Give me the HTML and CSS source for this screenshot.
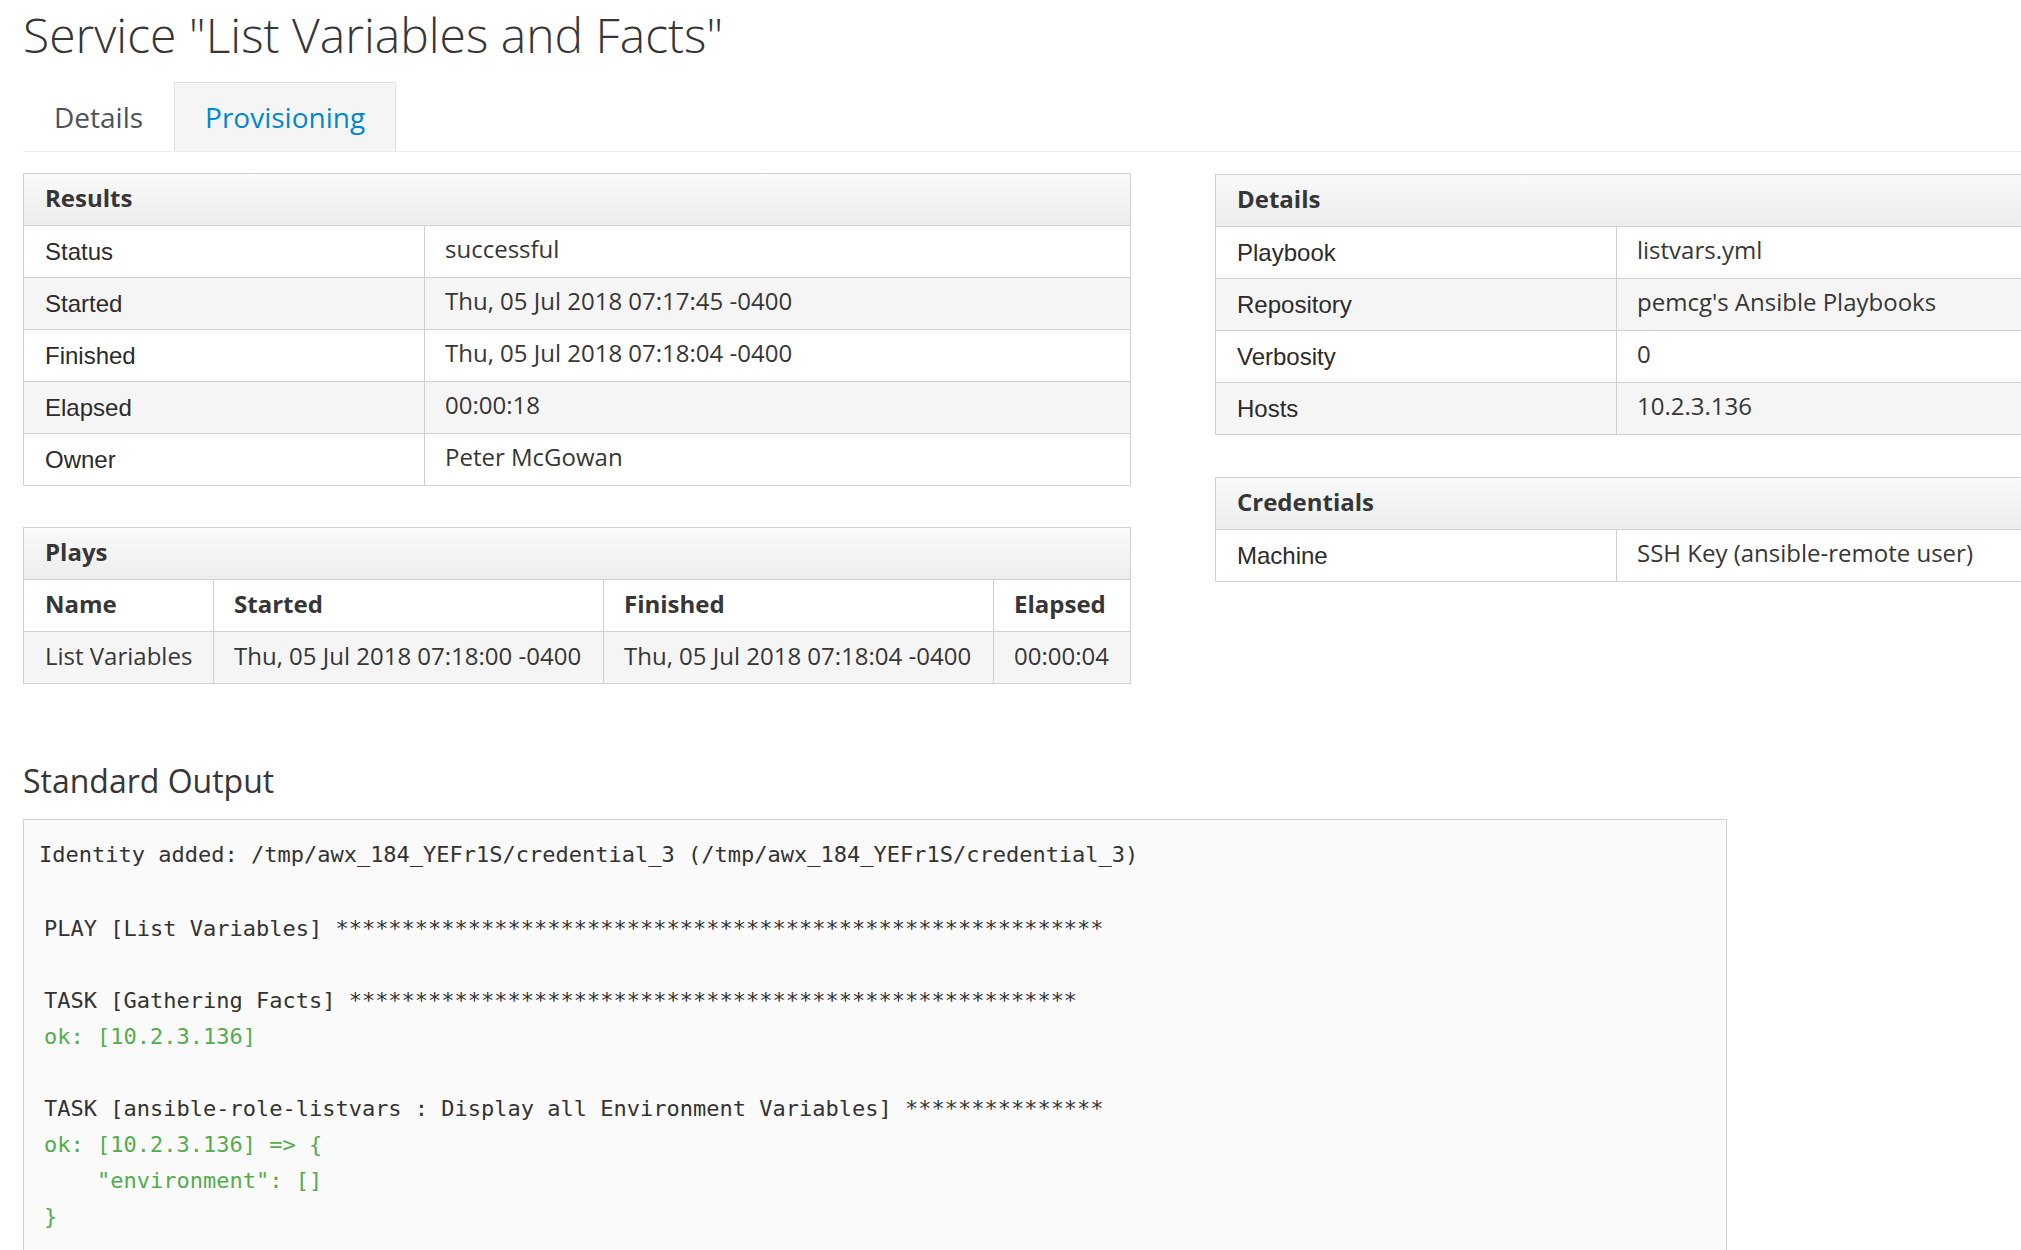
FILE: index.html
```html
<!DOCTYPE html>
<html lang="en">
<head>
<meta charset="utf-8">
<title>Service "List Variables and Facts"</title>
<link rel="stylesheet" href="styles.css">
</head>
<body>
<div class="page">
  <h1 class="title">Service "List Variables and Facts"</h1>

  <ul class="tabs">
    <li class="tab">Details</li>
    <li class="tab active">Provisioning</li>
  </ul>

  <div class="panels">
    <div class="col">
      <table class="tbl kv">
        <colgroup><col class="c-label"><col></colgroup>
        <thead><tr><th colspan="2" class="cap">Results</th></tr></thead>
        <tbody>
          <tr><td class="lbl">Status</td><td class="val">successful</td></tr>
          <tr><td class="lbl">Started</td><td class="val">Thu, 05 Jul 2018 07:17:45 -0400</td></tr>
          <tr><td class="lbl">Finished</td><td class="val">Thu, 05 Jul 2018 07:18:04 -0400</td></tr>
          <tr><td class="lbl">Elapsed</td><td class="val">00:00:18</td></tr>
          <tr><td class="lbl">Owner</td><td class="val">Peter McGowan</td></tr>
        </tbody>
      </table>

      <table class="tbl plays">
        <colgroup><col class="c-name"><col class="c-date"><col class="c-date"><col class="c-el"></colgroup>
        <thead><tr><th colspan="4" class="cap">Plays</th></tr></thead>
        <tbody>
          <tr class="hrow"><th>Name</th><th class="sep">Started</th><th class="sep">Finished</th><th class="sep">Elapsed</th></tr>
          <tr><td class="val">List Variables</td><td class="val sep">Thu, 05 Jul 2018 07:18:00 -0400</td><td class="val sep">Thu, 05 Jul 2018 07:18:04 -0400</td><td class="val sep">00:00:04</td></tr>
        </tbody>
      </table>
    </div>

    <div class="col col-right">
      <table class="tbl kv">
        <colgroup><col class="c-label"><col></colgroup>
        <thead><tr><th colspan="2" class="cap">Details</th></tr></thead>
        <tbody>
          <tr><td class="lbl">Playbook</td><td class="val">listvars.yml</td></tr>
          <tr><td class="lbl">Repository</td><td class="val">pemcg's Ansible Playbooks</td></tr>
          <tr><td class="lbl">Verbosity</td><td class="val">0</td></tr>
          <tr><td class="lbl">Hosts</td><td class="val">10.2.3.136</td></tr>
        </tbody>
      </table>

      <table class="tbl kv">
        <colgroup><col class="c-label"><col></colgroup>
        <thead><tr><th colspan="2" class="cap">Credentials</th></tr></thead>
        <tbody>
          <tr><td class="lbl">Machine</td><td class="val">SSH Key (ansible-remote user)</td></tr>
        </tbody>
      </table>
    </div>
  </div>

  <h2 class="so-title">Standard Output</h2>
  <div class="stdout">
    <div class="line first">Identity added: /tmp/awx_184_YEFr1S/credential_3 (/tmp/awx_184_YEFr1S/credential_3)</div>
    <div class="line"> </div>
    <div class="line">PLAY [List Variables] **********************************************************</div>
    <div class="line"> </div>
    <div class="line">TASK [Gathering Facts] *******************************************************</div>
    <div class="line ok">ok: [10.2.3.136]</div>
    <div class="line"> </div>
    <div class="line">TASK [ansible-role-listvars : Display all Environment Variables] ***************</div>
    <div class="line ok">ok: [10.2.3.136] =&gt; {</div>
    <div class="line ok">    "environment": []</div>
    <div class="line ok">}</div>
  </div>
</div>
</body>
</html>
```

FILE: styles.css
```css
html, body {
  margin: 0;
  padding: 0;
  overflow: hidden;
  background: #ffffff;
}

.page {
  padding-left: 23px;
  width: 2400px;
  font-family: "Open Sans", "Liberation Sans", sans-serif;
  color: #363636;
}

.title {
  margin: 7px 0 0 0;
  font-size: 48px;
  line-height: 56px;
  font-weight: 300;
  color: #363636;
}

.tabs {
  list-style: none;
  margin: 19px 0 0 0;
  padding: 0;
  display: flex;
  border-bottom: 1px solid #ededed;
  width: 2377px;
}

.tab {
  height: 68px;
  line-height: 68px;
  padding: 0 30px;
  font-size: 28px;
  color: #4d5258;
  border: 1px solid transparent;
  border-bottom: 0;
}

.tab.active {
  background: #f5f5f5;
  border-color: #e1e1e1;
  color: #0088ce;
}

.panels {
  display: grid;
  grid-template-columns: 1108px 1108px;
  column-gap: 84px;
  align-items: start;
  margin-top: 21px;
}

.col {
  display: flex;
  flex-direction: column;
  gap: 41px;
}

.col-right {
  margin-top: 1px;
  gap: 42px;
}

.tbl {
  width: 1108px;
  table-layout: fixed;
  border-collapse: separate;
  border-spacing: 0;
  border: 1px solid #d1d1d1;
  font-size: 24px;
}

.tbl th,
.tbl td {
  padding: 0 20px 0 21px;
  line-height: 51px;
  text-align: left;
  white-space: nowrap;
  overflow: hidden;
  box-sizing: border-box;
}

.tbl tbody tr > * {
  border-top: 1px solid #d1d1d1;
}

.tbl tbody tr:nth-child(even) {
  background: #f5f5f5;
}

.tbl .cap {
  background: linear-gradient(to bottom, #fafafa 0%, #ededed 100%);
  font-weight: 700;
  color: #363636;
  padding-bottom: 4px;
  line-height: 47px;
}

.c-label { width: 400px; }
.c-name { width: 189px; }
.c-date { width: 390px; }
.c-el { width: 137px; }

.tbl .lbl {
  font-family: "Liberation Sans", Arial, sans-serif;
  color: #2b2b2b;
  padding-top: 1px;
  line-height: 50px;
}

.tbl .val {
  font-family: "Open Sans", sans-serif;
  color: #363636;
  padding-bottom: 4px;
  line-height: 47px;
}

.kv .val {
  border-left: 1px solid #d1d1d1;
  padding-left: 20px;
  padding-bottom: 5px;
  line-height: 46px;
}

.plays .sep {
  border-left: 1px solid #d1d1d1;
  padding-left: 20px;
}

.plays .hrow th {
  font-weight: 700;
  color: #363636;
  background: #ffffff;
  padding-bottom: 4px;
  line-height: 47px;
}

.plays tbody tr:nth-child(2) {
  background: #f5f5f5;
}

.so-title {
  margin: 77px 0 0 0;
  font-size: 32px;
  line-height: 40px;
  font-weight: 400;
  color: #363636;
}

.stdout {
  margin-top: 18px;
  width: 1704px;
  height: 600px;
  box-sizing: border-box;
  border: 1px solid #d1d1d1;
  background: #fafafa;
  padding: 17px 0 0 20px;
  font-family: "DejaVu Sans Mono", "Liberation Mono", monospace;
  font-size: 22px;
  color: #333333;
}

.line {
  line-height: 36px;
  height: 36px;
  white-space: pre;
}

.line.first {
  margin-left: -5px;
  margin-bottom: 2px;
}

.line.ok {
  color: #52ad4c;
}
```
